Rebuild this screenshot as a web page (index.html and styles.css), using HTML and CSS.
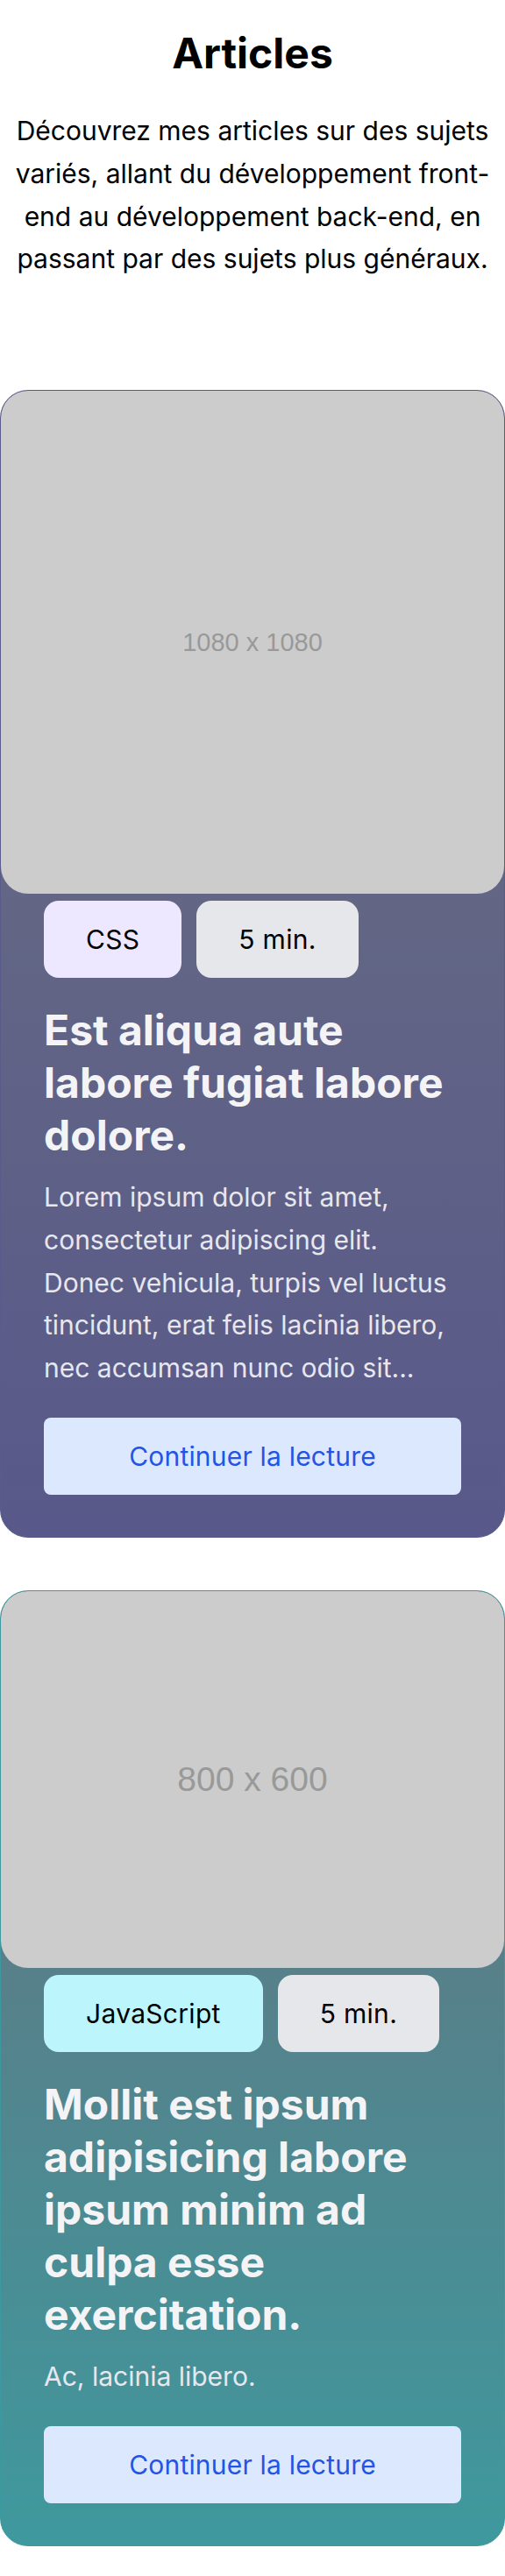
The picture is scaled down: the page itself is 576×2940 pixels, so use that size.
FILE: index.html
```html
<!DOCTYPE html>
<html lang="fr">
<head>
<meta charset="utf-8">
<title>Articles</title>
<link rel="stylesheet" href="styles.css">
</head>
<body>
<header class="intro">
  <h1 class="title">Articles</h1>
  <p class="lead">Découvrez mes articles sur des sujets variés, allant du développement front-end au développement back-end, en passant par des sujets plus généraux.</p>
</header>
<main class="list">
  <article class="card card--indigo">
    <div class="thumb thumb--square"><span class="thumb-label thumb-label--small">1080 x 1080</span></div>
    <div class="card-body">
      <div class="tags">
        <span class="tag tag--violet">CSS</span>
        <span class="tag tag--gray">5 min.</span>
      </div>
      <h2 class="card-title">Est aliqua aute labore fugiat labore dolore.</h2>
      <p class="excerpt">Lorem ipsum dolor sit amet, consectetur adipiscing elit. Donec vehicula, turpis vel luctus tincidunt, erat felis lacinia libero, nec accumsan nunc odio sit...</p>
      <a class="btn" href="#">Continuer la lecture</a>
    </div>
  </article>
  <article class="card card--teal">
    <div class="thumb thumb--wide"><span class="thumb-label thumb-label--large">800 x 600</span></div>
    <div class="card-body">
      <div class="tags">
        <span class="tag tag--cyan">JavaScript</span>
        <span class="tag tag--gray">5 min.</span>
      </div>
      <h2 class="card-title">Mollit est ipsum adipisicing labore ipsum minim ad culpa esse exercitation.</h2>
      <p class="excerpt">Ac, lacinia libero.</p>
      <a class="btn" href="#">Continuer la lecture</a>
    </div>
  </article>
</main>
</body>
</html>
```

FILE: styles.css
```css
* { box-sizing: border-box; }

html, body {
  margin: 0;
  padding: 0;
  background: #ffffff;
}

body {
  font-family: Inter, "Noto Sans", "Liberation Sans", sans-serif;
  color: #000;
}

.intro {
  padding: 37px 8px 0;
  text-align: center;
}

.title {
  margin: 0;
  font-size: 48px;
  line-height: 48px;
  font-weight: 700;
}

.lead {
  margin: 40px 0 0;
  font-size: 30px;
  line-height: 48.75px;
  font-weight: 400;
}

.list {
  padding-top: 125px;
  display: flex;
  flex-direction: column;
  gap: 60px;
}

.card {
  border: 1px solid;
  border-radius: 32px;
  overflow: hidden;
  padding-bottom: 48px;
}

.card--indigo {
  border-color: #5a5a8b;
  background: linear-gradient(to bottom, #6b7280 0%, #58588a 100%);
}

.card--teal {
  border-color: #3c999f;
  background: linear-gradient(to bottom, #68707d 0%, #3e999e 100%);
}

.thumb {
  width: 100%;
  background: #cccccc;
  border-radius: 31px;
  display: flex;
  align-items: center;
  justify-content: center;
}

.thumb--square { aspect-ratio: 1 / 1; }
.thumb--wide { aspect-ratio: 4 / 3; }

.thumb-label {
  font-family: "Liberation Sans", Arial, sans-serif;
  color: #999999;
}

.thumb-label--small { font-size: 29px; }
.thumb-label--large { font-size: 39px; }

.card-body {
  padding: 0 49px;
}

.tags {
  display: flex;
  gap: 17px;
  margin-top: 8px;
}

.tag {
  display: inline-block;
  padding: 24px 48px;
  font-size: 30px;
  line-height: 40px;
  letter-spacing: 0.3px;
  border-radius: 17px;
  color: #000;
}

.tag--violet { background: #ede7ff; }
.tag--gray { background: #e5e7eb; }
.tag--cyan { background: #bdf5fd; }

.card-title {
  margin: 30px 0 0;
  font-size: 48px;
  line-height: 60px;
  font-weight: 700;
  color: #f4f4f6;
}

.excerpt {
  margin: 16px 0 0;
  font-size: 30px;
  line-height: 48.75px;
  color: #e7e7ee;
}

.btn {
  display: block;
  margin-top: 32px;
  padding: 24px 0;
  font-size: 30px;
  line-height: 40px;
  letter-spacing: 0.2px;
  text-align: center;
  text-decoration: none;
  color: #2454e5;
  background: #dbe8fe;
  border-radius: 8px;
}
```
